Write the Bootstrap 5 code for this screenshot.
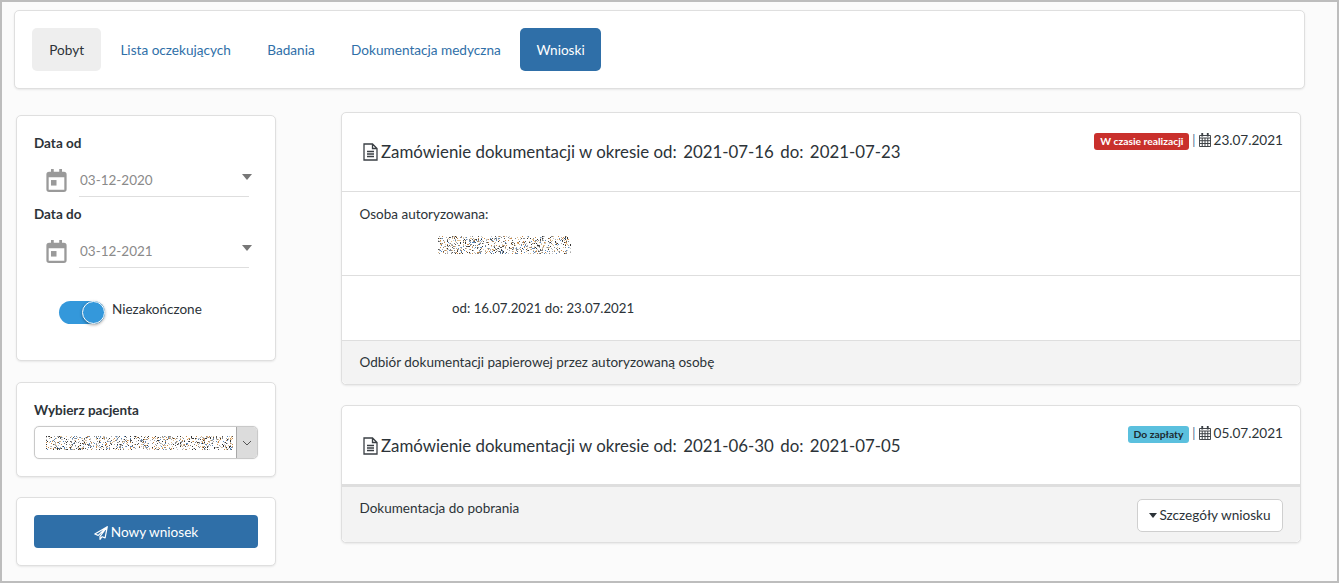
<!DOCTYPE html>
<html lang="pl">
<head>
<meta charset="utf-8">
<title>Wnioski</title>
<link href="https://cdn.jsdelivr.net/npm/bootstrap@5.3.0/dist/css/bootstrap.min.css" rel="stylesheet">
<style>
html,body{height:100%;}
body{font-family:Lato,"Liberation Sans",sans-serif;font-size:13.5px;color:#2c3338;background:#fbfbfb;overflow:hidden;}
.frame{height:583px;border:2px solid #bdbdbd;padding:8px 32px 0 12px;background:#fbfbfb;}
.pcard{background:#fff;border:1px solid #dfdfdf;border-radius:5px;box-shadow:0 1px 2px rgba(0,0,0,.08);}
.topbar{height:79px;padding:17px;}
.topbar .nav{gap:2px;}
.topbar .nav-link{height:43px;padding:0 17.2px;font-size:13.6px;line-height:44px;color:#2f6fa8;border-radius:5px;}
.topbar .nav-link.muted-pill{background:#eee;color:#2c3338;}
.topbar .nav-link.active{background:#2f6fa8;color:#fff;padding:0 16.6px;}
.maincols{gap:65px;padding-left:2px;}
.sidecol{width:260px;padding-top:26px;flex:none;}
.contentcol{width:960px;padding-top:23px;flex:none;}
.filtercard{height:246px;padding:17px 17px 0;margin-bottom:21px;}
.fieldlabel{font-weight:700;font-size:13.5px;line-height:20px;color:#2c3338;}
.daterow{height:51px;padding-left:12px;}
.calico{margin-top:16px;}
.datetxt{margin-left:12px;width:170px;height:37px;margin-top:7px;padding-left:1px;border-bottom:1px solid #dedede;color:#8a8a8a;font-size:13.500px;line-height:40px;position:relative;}
.datetxt::after{content:"";position:absolute;right:-3px;top:14px;border:5px solid transparent;border-top:6px solid #777;border-bottom:0;}
.togglerow{margin-top:26px;padding-left:25px;height:24px;}
.togtrack{width:46px;height:23px;border-radius:12px;background:#3498db;position:relative;flex:none;}
.togknob{position:absolute;right:0;top:0;width:23px;height:23px;border-radius:50%;background:#3498db;border:1.5px solid #fff;box-shadow:0 1px 3px rgba(0,0,0,.35);}
.toglabel{margin-left:7px;line-height:16px;}
.patientcard{height:95px;padding:17px 17px 0;margin-bottom:20px;}
.patientsel{height:33px;border:1px solid #c9c9c9;border-radius:5px;overflow:hidden;margin-top:6px;box-shadow:0 0 1px rgba(0,0,0,.2);}
.patientval{flex:1;padding-left:11px;}
.patientchev{width:21px;background:#dcdcdc;border-left:1px solid #a8a8a8;}
.actioncard{height:69px;padding:17px;}
.btn-primaryish{width:224px;height:33px;padding:0;line-height:34px;background:#2f6fa8;border:0;border-radius:4px;color:#fff;font-size:13.6px;}
.planeico{vertical-align:-3px;margin-right:3px;}
.reqcard{margin-bottom:20px;}
.reqhead{height:79px;padding:0 17px 0 18px;border-bottom:1px solid #dedede;}
.reqtitle{font-size:16.85px;line-height:22px;margin:0;padding-top:28px;font-weight:400;white-space:pre;color:#2c3338;}
.reqtitle-low{padding-top:29px;}
.tightgaps{word-spacing:-1.1px;}
.docico{vertical-align:-3px;margin:0 3px 0 3px;}
.reqmeta{padding-top:16px;font-size:13.6px;line-height:22px;white-space:nowrap;}
.statetag{display:inline-block;font-size:10.3px;font-weight:700;line-height:17px;height:17px;padding:0 6px;border-radius:3px;vertical-align:0;}
.tag-red{background:#c9302c;color:#fff;}
.tag-blue{background:#5bc0de;color:#1c2a30;}
.sep{color:#4f6f8f;margin:0 3px 0 3px;font-size:12.5px;}
.gridico{vertical-align:-2px;margin-right:3px;}
.authrow{height:84px;padding:13px 18px 0 17.5px;border-bottom:1px solid #dedede;line-height:18px;}
.noiseblock{display:block;margin:13px 0 0 78.5px;}
.rangerow{height:64px;padding:23px 0 0 110px;line-height:18px;font-size:13.25px;}
.reqfoot{height:44px;padding:0 17.5px;background:#f3f3f3;border-top:1px solid #dedede;border-radius:0 0 5px 5px;line-height:42px;}
.reqfoot2{height:57px;padding:12px 17px 0 17.5px;background:#f3f3f3;border-top:2px solid #dedede;border-radius:0 0 5px 5px;line-height:18px;}
.detailsbtn{width:146px;height:33px;padding:0;background:#fff;border:1px solid #cfcfcf;border-radius:5px;font-size:13.6px;color:#2c3338;line-height:31px;}
.caretdown{display:inline-block;border:4.5px solid transparent;border-top:5px solid #2c3338;border-bottom:0;vertical-align:2px;margin-right:2px;}
</style>
</head>
<body>
<div class="frame">
  <div class="pcard topbar">
    <ul class="nav nav-pills flex-nowrap">
      <li class="nav-item"><a class="nav-link muted-pill" href="#">Pobyt</a></li>
      <li class="nav-item"><a class="nav-link" href="#">Lista oczekujących</a></li>
      <li class="nav-item"><a class="nav-link" href="#">Badania</a></li>
      <li class="nav-item"><a class="nav-link" href="#">Dokumentacja medyczna</a></li>
      <li class="nav-item"><a class="nav-link active" href="#">Wnioski</a></li>
    </ul>
  </div>
  <div class="d-flex maincols">
    <div class="sidecol">
      <div class="pcard filtercard">
        <div class="fieldlabel">Data od</div>
        <div class="d-flex daterow">
          <svg class="calico" width="21" height="23" viewBox="0 0 22 25" fill="#9a9a9a"><path d="M5 0h3v3h6V0h3v3h2a3 3 0 0 1 3 3v16a3 3 0 0 1-3 3H3a3 3 0 0 1-3-3V6a3 3 0 0 1 3-3h2zM2.500 9v13.500h17V9z" fill-rule="evenodd"/><rect x="5" y="12" width="6" height="6"/></svg>
          <div class="datetxt">03-12-2020</div>
        </div>
        <div class="fieldlabel">Data do</div>
        <div class="d-flex daterow">
          <svg class="calico" width="21" height="23" viewBox="0 0 22 25" fill="#9a9a9a"><path d="M5 0h3v3h6V0h3v3h2a3 3 0 0 1 3 3v16a3 3 0 0 1-3 3H3a3 3 0 0 1-3-3V6a3 3 0 0 1 3-3h2zM2.500 9v13.500h17V9z" fill-rule="evenodd"/><rect x="5" y="12" width="6" height="6"/></svg>
          <div class="datetxt">03-12-2021</div>
        </div>
        <div class="d-flex togglerow">
          <div class="togtrack"><div class="togknob"></div></div>
          <div class="toglabel">Niezakończone</div>
        </div>
      </div>
      <div class="pcard patientcard">
        <div class="fieldlabel">Wybierz pacjenta</div>
        <div class="d-flex patientsel">
          <div class="patientval d-flex align-items-center"><svg class="noisy" data-w="187" data-h="14" width="187" height="14"></svg></div>
          <div class="patientchev d-flex align-items-center justify-content-center"><svg width="10" height="6" viewBox="0 0 10 6" fill="none" stroke="#555" stroke-width="1"><path d="M1 1l4 4 4-4"/></svg></div>
        </div>
      </div>
      <div class="pcard actioncard">
        <button type="button" class="btn btn-primaryish"><svg class="planeico" width="14" height="14" viewBox="0 0 14 14" fill="none" stroke="#fff" stroke-width="1.200" stroke-linejoin="round"><path d="M13.300.7L.8 8l3.400 1.400L13.300.7 6 10.300v3l2.100-2.600 3 1.200z"/></svg>Nowy wniosek</button>
      </div>
    </div>
    <div class="contentcol">
      <div class="pcard reqcard">
        <div class="d-flex justify-content-between reqhead">
          <h5 class="reqtitle"><svg class="docico" width="15" height="18" viewBox="0 0 15 18" fill="none" stroke="#3a3f44" stroke-width="1.300"><path d="M1 1h8.500L14 5.500V17H1zM9.500 1v4.500H14M4 8.500h7M4 11h7M4 13.500h7"/></svg>Zamówienie dokumentacji w okresie od:<span class="tightgaps">  2021-07-16  do:  2021-07-23</span></h5>
          <div class="reqmeta"><span class="statetag tag-red">W czasie realizacji</span><span class="sep">|</span><svg class="gridico" width="12" height="14" viewBox="0 0 13 14" preserveAspectRatio="none" fill="none" stroke="#3a3f44" stroke-width="1"><path d="M.5 2.500h12v11H.5zM.5 5h12M.5 7.700h12M.5 10.500h12M3.500 5v8.500M6.500 5v8.500M9.500 5v8.500"/><path d="M3.500 0v3.500M9.500 0v3.500" stroke-width="2"/></svg>23.07.2021</div>
        </div>
        <div class="authrow">Osoba autoryzowana:<svg class="noisy noiseblock" data-w="133" data-h="18" width="133" height="18"></svg></div>
        <div class="rangerow">od: 16.07.2021 do: 23.07.2021</div>
        <div class="reqfoot">Odbiór dokumentacji papierowej przez autoryzowaną osobę</div>
      </div>
      <div class="pcard reqcard">
        <div class="d-flex justify-content-between reqhead">
          <h5 class="reqtitle reqtitle-low"><svg class="docico" width="15" height="18" viewBox="0 0 15 18" fill="none" stroke="#3a3f44" stroke-width="1.300"><path d="M1 1h8.500L14 5.500V17H1zM9.500 1v4.500H14M4 8.500h7M4 11h7M4 13.500h7"/></svg>Zamówienie dokumentacji w okresie od:<span class="tightgaps">  2021-06-30  do:  2021-07-05</span></h5>
          <div class="reqmeta"><span class="statetag tag-blue">Do zapłaty</span><span class="sep">|</span><svg class="gridico" width="12" height="14" viewBox="0 0 13 14" preserveAspectRatio="none" fill="none" stroke="#3a3f44" stroke-width="1"><path d="M.5 2.500h12v11H.5zM.5 5h12M.5 7.700h12M.5 10.500h12M3.500 5v8.500M6.500 5v8.500M9.500 5v8.500"/><path d="M3.500 0v3.500M9.500 0v3.500" stroke-width="2"/></svg>05.07.2021</div>
        </div>
        <div class="d-flex justify-content-between reqfoot2">
          <div>Dokumentacja do pobrania</div>
          <button type="button" class="btn detailsbtn"><span class="caretdown"></span>Szczegóły wniosku</button>
        </div>
      </div>
    </div>
  </div>
</div>
<script src="https://cdn.jsdelivr.net/npm/bootstrap@5.3.0/dist/js/bootstrap.bundle.min.js"></script>
<script>
var seed=12345;function rnd(){seed=(seed*16807)%2147483647;return seed/2147483647;}
var cols=["#555","#888","#aaa","#c8c8c8","#c98a4a","#5a8ac0","#333","#e0c090"];
document.querySelectorAll("svg.noisy").forEach(function(s){
  var w=+s.dataset.w,h=+s.dataset.h,o="";
  for(var y=0;y<h;y++)for(var x=0;x<w;x++){if(rnd()<0.3){o+='<rect x="'+x+'" y="'+y+'" width="1" height="1" fill="'+cols[Math.floor(rnd()*cols.length)]+'"/>';}}
  s.innerHTML=o;
});
</script>
</body>
</html>
